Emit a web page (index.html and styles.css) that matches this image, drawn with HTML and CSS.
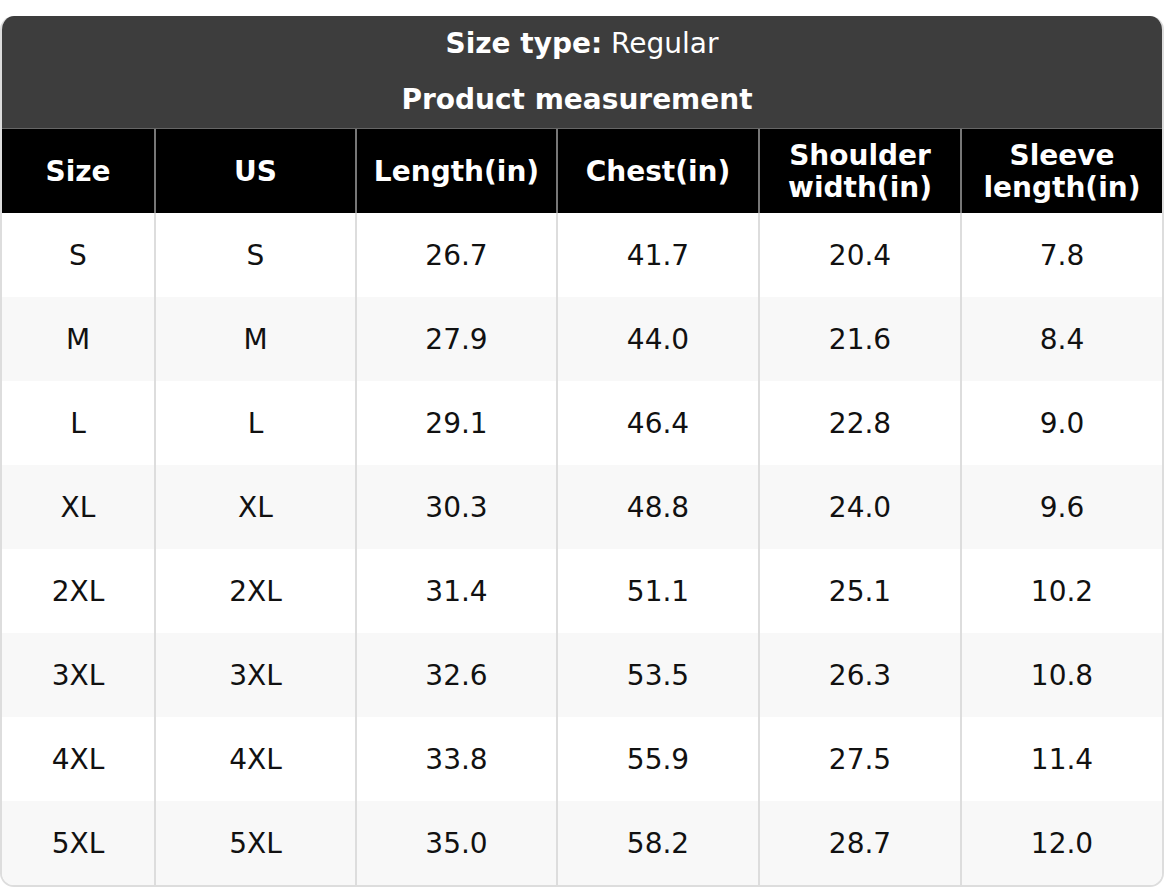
FILE: index.html
```html
<!DOCTYPE html>
<html>
<head>
<meta charset="utf-8">
<link rel="stylesheet" href="styles.css">
</head>
<body>
<div class="card">
  <div class="head">
    <div class="line"><strong>Size type:</strong> Regular</div>
    <div class="line line-sub"><strong>Product measurement</strong></div>
  </div>
  <table class="grid">
    <colgroup>
      <col class="c1"><col class="c2"><col class="c3"><col class="c4"><col class="c5"><col class="c6">
    </colgroup>
    <thead>
      <tr><th>Size</th><th>US</th><th>Length(in)</th><th>Chest(in)</th><th>Shoulder<br>width(in)</th><th>Sleeve<br>length(in)</th></tr>
    </thead>
    <tbody>
      <tr><td>S</td><td>S</td><td>26.7</td><td>41.7</td><td>20.4</td><td>7.8</td></tr>
      <tr><td>M</td><td>M</td><td>27.9</td><td>44.0</td><td>21.6</td><td>8.4</td></tr>
      <tr><td>L</td><td>L</td><td>29.1</td><td>46.4</td><td>22.8</td><td>9.0</td></tr>
      <tr><td>XL</td><td>XL</td><td>30.3</td><td>48.8</td><td>24.0</td><td>9.6</td></tr>
      <tr><td>2XL</td><td>2XL</td><td>31.4</td><td>51.1</td><td>25.1</td><td>10.2</td></tr>
      <tr><td>3XL</td><td>3XL</td><td>32.6</td><td>53.5</td><td>26.3</td><td>10.8</td></tr>
      <tr><td>4XL</td><td>4XL</td><td>33.8</td><td>55.9</td><td>27.5</td><td>11.4</td></tr>
      <tr><td>5XL</td><td>5XL</td><td>35.0</td><td>58.2</td><td>28.7</td><td>12.0</td></tr>
    </tbody>
  </table>
</div>
</body>
</html>
```
FILE: styles.css
```css
html, body {
  margin: 0;
  padding: 0;
  background: #fff;
}
body {
  padding-top: 16px;
  font-family: "DejaVu Sans", sans-serif;
  font-size: 28px;
  color: #111;
}
.card {
  width: 1164px;
  box-sizing: border-box;
  border: 2px solid #ddd;
  border-top: none;
  border-radius: 14px;
  overflow: hidden;
}
.head {
  background: #3d3d3d;
  color: #fff;
  text-align: center;
  border-bottom: 2px solid #666;
}
.line {
  height: 56px;
  line-height: 56px;
}
.line-sub {
  padding-right: 10px;
}
.line strong { font-weight: bold; }
.grid {
  width: 100%;
  border-collapse: collapse;
  table-layout: fixed;
  margin-top: -1px;
}
.c1 { width: 153px; }
.c2 { width: 201px; }
.c3 { width: 201px; }
.c4 { width: 202px; }
.c5 { width: 202px; }
.c6 { width: auto; }
.grid th {
  background: #000;
  color: #fff;
  font-weight: bold;
  height: 83px;
  line-height: 32px;
  padding: 1px 0 0;
  text-align: center;
  border-left: 2px solid #777;
}
.grid td {
  height: 83px;
  padding: 1px 0 0;
  text-align: center;
  border-left: 2px solid #ddd;
  font-weight: normal;
}
.grid th:first-child, .grid td:first-child { border-left: none; }
.grid tbody tr:nth-child(even) td { background: #f8f8f8; }
```
